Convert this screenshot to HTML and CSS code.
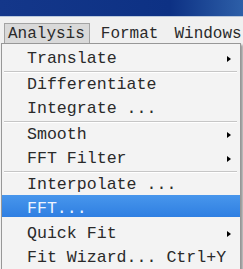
FILE: index.html
```html
<!DOCTYPE html>
<html>
  <head>
    <meta charset="utf-8">
    <title>Analysis menu</title>
    <link rel="stylesheet" href="styles.css">
  </head>
  <body>
    <div class="titlebar"></div>
    <div class="menubar">
      <span class="top open">Analysis</span>
      <span class="top">Format</span>
      <span class="top">Windows</span>
    </div>
    <ul class="menu">
      <li class="item sub">Translate</li>
      <li class="sep"></li>
      <li class="item">Differentiate</li>
      <li class="item">Integrate ...</li>
      <li class="sep"></li>
      <li class="item sub">Smooth</li>
      <li class="item sub">FFT Filter</li>
      <li class="sep"></li>
      <li class="item">Interpolate ...</li>
      <li class="item active">FFT...</li>
      <li class="item sub">Quick Fit</li>
      <li class="item">Fit Wizard... Ctrl+Y</li>
    </ul>
  </body>
</html>
```
FILE: styles.css
```css
*{
  margin: 0;
  padding: 0;
}
body{
  width: 243px;
  height: 269px;
  overflow: hidden;
  background: #f0f0f0;
  font-family: "Courier New", "Nimbus Mono PS", "FreeMono", "Liberation Mono", monospace;
  color: #2a2a2a;
}
.titlebar{
  height: 16px;
  background: linear-gradient(90deg, #14378a 0%, #0d3184 70%, #2d5fa8 100%);
  border-bottom: 1px solid #b9c8dc;
}
.menubar{
  display: flex;
  gap: 7px;
  padding: 6px 0 0 4px;
  height: 20px;
  font-size: 16px;
  white-space: nowrap;
}
.top{
  padding: 0 4px 0 3px;
  line-height: 20px;
  border: 1px solid transparent;
  border-bottom: none;
}
.top.open{
  background: #d9d9d9;
  border-color: #a3a3a3;
}
.menu{
  list-style: none;
  margin-left: 1px;
  width: 238px;
  border: 1px solid #979797;
  background: #f3f3f3;
  padding-top: 3px;
  font-size: 16.6px;
  box-shadow: 2px 2px 2px rgba(0,0,0,.35);
}
.item{
  position: relative;
  height: 24px;
  line-height: 24px;
  padding-left: 25px;
  white-space: pre;
}
.item.sub::after{
  content: "";
  position: absolute;
  left: 225px;
  top: 9px;
  border-left: 4px solid #000;
  border-top: 3.5px solid transparent;
  border-bottom: 3.5px solid transparent;
}
.item.active{
  height: 19px;
  padding-top: 3px;
  line-height: 22px;
  margin: -2px 0 5px;
  overflow: hidden;
  background: linear-gradient(#4896ec, #2f7fe2);
  color: #eef4ff;
}
.sep{
  height: 1px;
  margin: 0 3px 0 2px;
  background: #c6c6c6;
  border-bottom: 1px solid #ffffff;
}
```
